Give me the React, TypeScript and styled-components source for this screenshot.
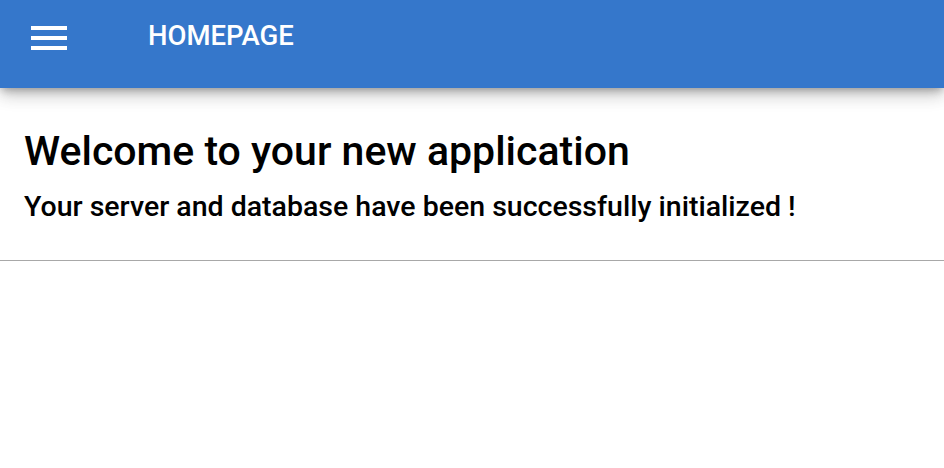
import styled, { createGlobalStyle } from "styled-components";

const GlobalStyle = createGlobalStyle`
  html, body {
    margin: 0;
    padding: 0;
    background: #ffffff;
    font-family: Roboto, "Liberation Sans", Arial, sans-serif;
  }
`;

const AppBar = styled.header`
  position: relative;
  z-index: 2;
  height: 88px;
  background: #3577cb;
  color: #ffffff;
  box-shadow: 0 4px 8px -2px rgba(0, 0, 0, 0.28), 0 8px 16px 0 rgba(0, 0, 0, 0.14),
    0 2px 20px 0 rgba(0, 0, 0, 0.12);
`;

const Toolbar = styled.div`
  display: flex;
  align-items: flex-start;
  padding: 14px 0 0 25px;
`;

const MenuButton = styled.button`
  display: flex;
  padding: 0;
  border: none;
  background: transparent;
  color: inherit;
  cursor: pointer;
`;

const Title = styled.h6`
  margin: 0 0 0 75px;
  font-size: 27.5px;
  font-weight: 500;
  line-height: 44px;
`;

const Card = styled.section`
  position: relative;
  z-index: 1;
  background: #ffffff;
  padding: 40px 24px 37px;
  border-bottom: 1px solid #a8a8a8;
  box-shadow: 0 2px 3px 0 rgba(0, 0, 0, 0.14);
`;

const Heading = styled.h1`
  margin: 0;
  font-size: 41px;
  font-weight: 500;
  line-height: 47px;
  color: #000000;
`;

const SubHeading = styled.h2`
  margin: 15px 0 0;
  font-size: 28.5px;
  font-weight: 500;
  line-height: 33px;
  color: #000000;
`;

const MenuIcon = () => (
  <svg width="48" height="48" viewBox="0 0 24 24" fill="currentColor">
    <path d="M3 18h18v-2H3v2zm0-5h18v-2H3v2zm0-7v2h18V6H3z" />
  </svg>
);

export default function App() {
  return (
    <>
      <GlobalStyle />
      <AppBar>
        <Toolbar>
          <MenuButton aria-label="menu">
            <MenuIcon />
          </MenuButton>
          <Title>HOMEPAGE</Title>
        </Toolbar>
      </AppBar>
      <Card>
        <Heading>Welcome to your new application</Heading>
        <SubHeading>Your server and database have been successfully initialized !</SubHeading>
      </Card>
    </>
  );
}
